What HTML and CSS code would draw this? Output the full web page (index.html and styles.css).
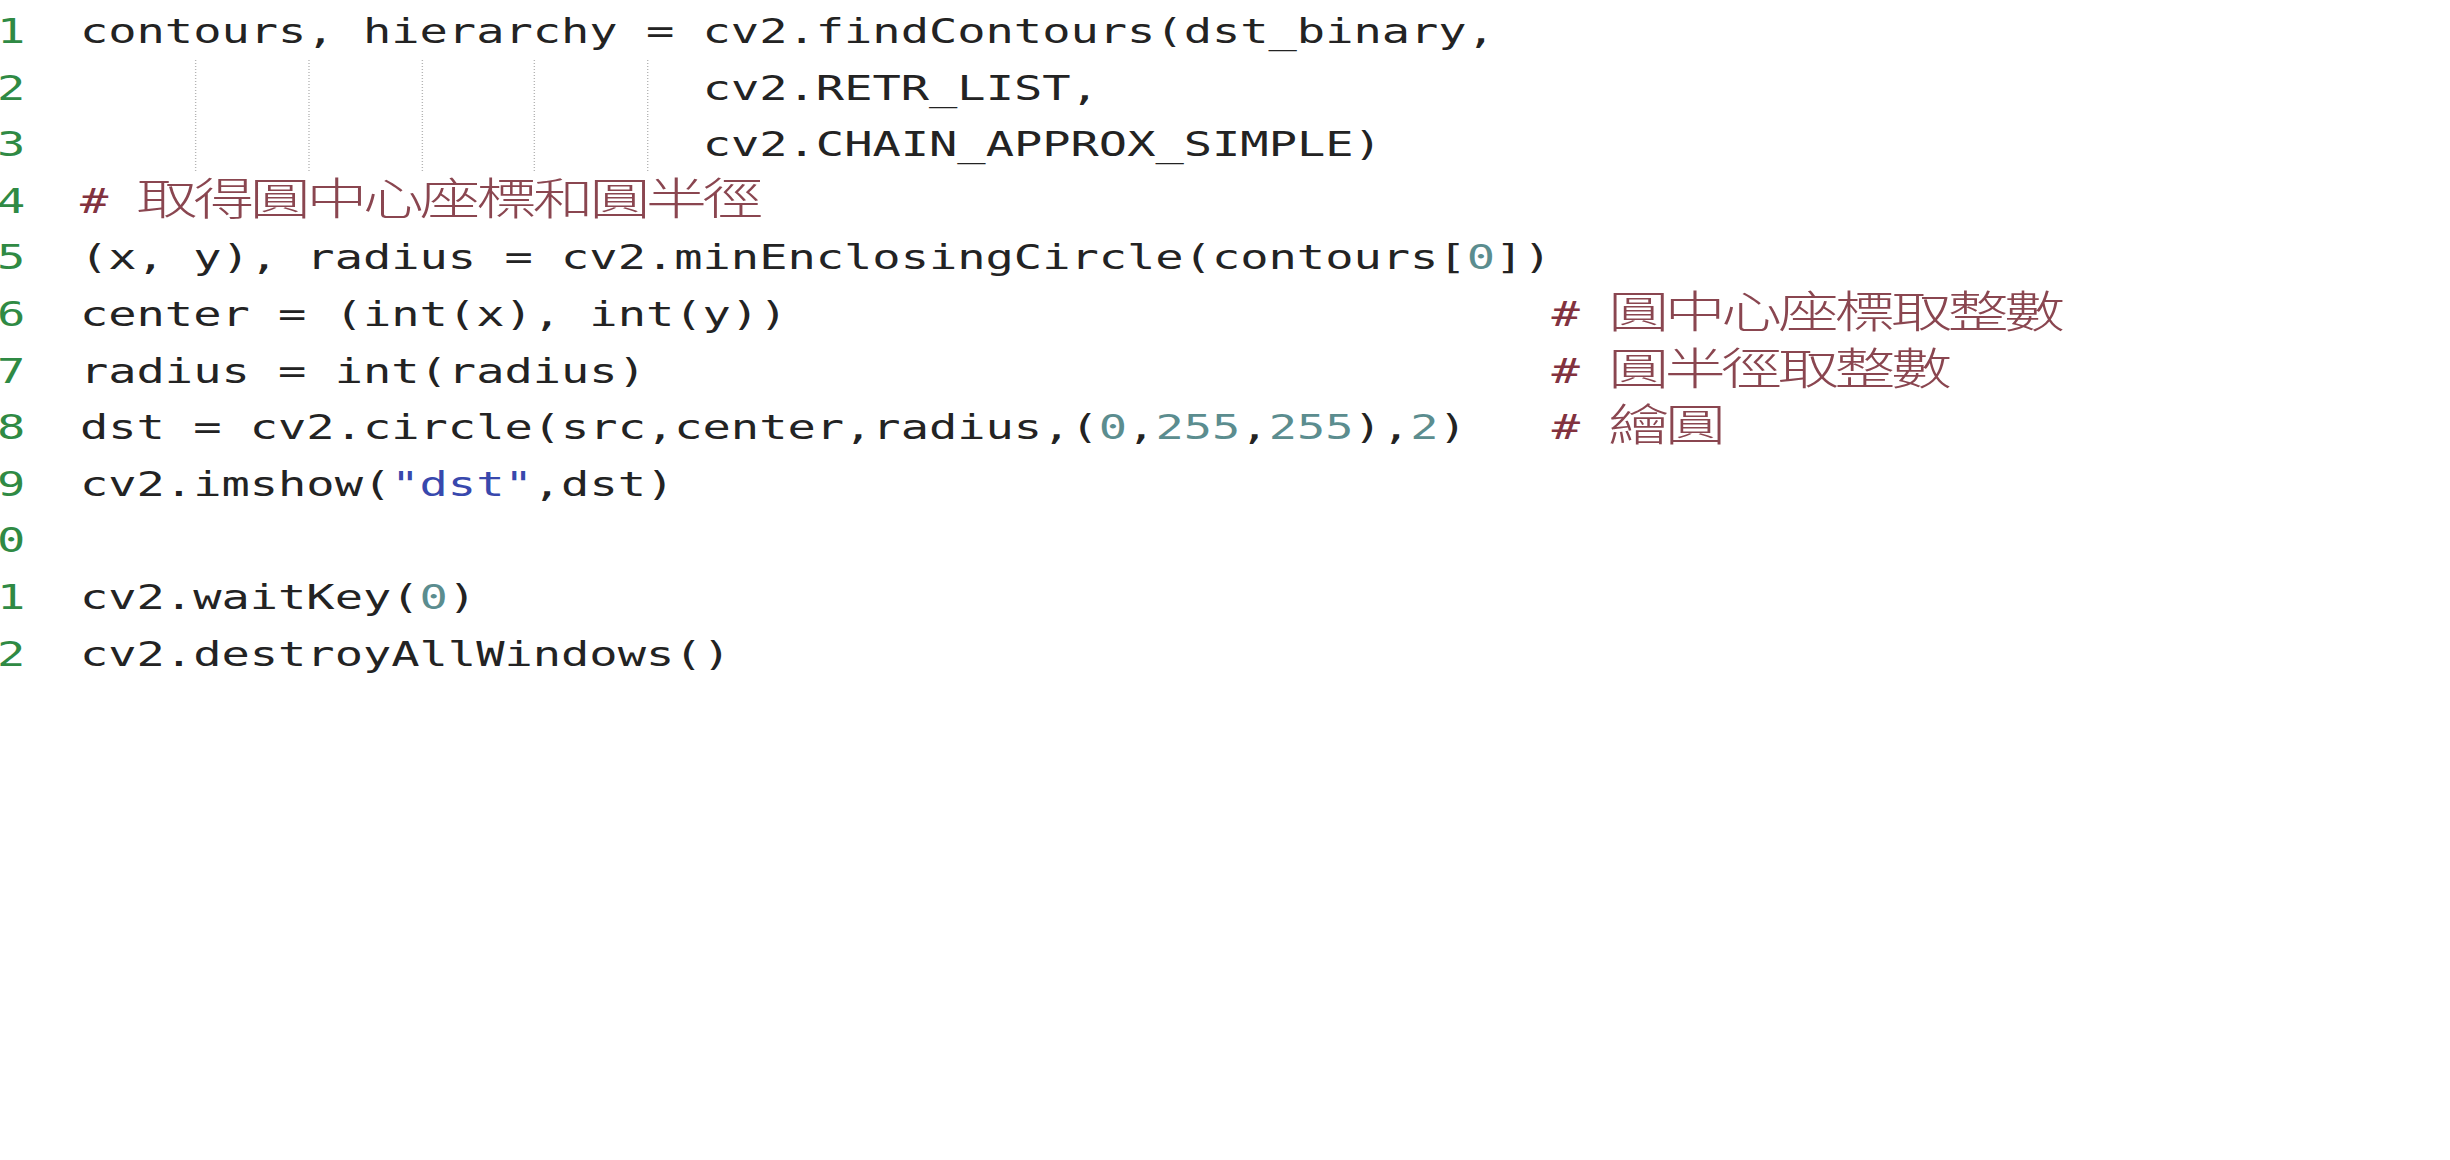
FILE: index.html
```html
<!DOCTYPE html>
<html lang="zh-Hant">
<head>
<meta charset="utf-8">
<title>cv2 minEnclosingCircle</title>
<link rel="stylesheet" href="styles.css">
</head>
<body>
<div class="editor">
  <div class="line"><span class="ln">1</span><span class="code">contours, hierarchy = cv2.findContours(dst_binary,</span></div>
  <div class="line"><span class="ln">2</span><span class="code">    <span class="guide">    </span><span class="guide">    </span><span class="guide">    </span><span class="guide">    </span><span class="guide">  </span>cv2.RETR_LIST,</span></div>
  <div class="line"><span class="ln">3</span><span class="code">    <span class="guide">    </span><span class="guide">    </span><span class="guide">    </span><span class="guide">    </span><span class="guide">  </span>cv2.CHAIN_APPROX_SIMPLE)</span></div>
  <div class="line"><span class="ln">4</span><span class="code"><span class="cm"># <span class="cjk">取得圓中心座標和圓半徑</span></span></span></div>
  <div class="line"><span class="ln">5</span><span class="code">(x, y), radius = cv2.minEnclosingCircle(contours[<span class="num">0</span>])</span></div>
  <div class="line"><span class="ln">6</span><span class="code">center = (int(x), int(y))                           <span class="cm"># <span class="cjk">圓中心座標取整數</span></span></span></div>
  <div class="line"><span class="ln">7</span><span class="code">radius = int(radius)                                <span class="cm"># <span class="cjk">圓半徑取整數</span></span></span></div>
  <div class="line"><span class="ln">8</span><span class="code">dst = cv2.circle(src,center,radius,(<span class="num">0</span>,<span class="num">255</span>,<span class="num">255</span>),<span class="num">2</span>)   <span class="cm"># <span class="cjk">繪圓</span></span></span></div>
  <div class="line"><span class="ln">9</span><span class="code">cv2.imshow(<span class="str">"dst"</span>,dst)</span></div>
  <div class="line"><span class="ln">10</span><span class="code"></span></div>
  <div class="line"><span class="ln">11</span><span class="code">cv2.waitKey(<span class="num">0</span>)</span></div>
  <div class="line"><span class="ln">12</span><span class="code">cv2.destroyAllWindows()</span></div>
</div>
</body>
</html>
```

FILE: styles.css
```css
html, body {
  margin: 0;
  padding: 0;
  background: #ffffff;
}

.editor {
  padding-top: 3px;
  font-family: "DejaVu Sans Mono", "Liberation Mono", monospace;
  font-size: 34px;
  line-height: 56.6px;
  color: #232323;
  transform: scaleX(1.3825);
  transform-origin: 0 0;
}

.line {
  display: flex;
  height: 56.6px;
  white-space: pre;
}

.ln {
  flex: none;
  width: 2ch;
  margin-left: -22.7px;
  text-align: right;
  color: #2f8a44;
}

.code {
  padding-left: 39.6px;
}

.guide {
  display: inline-block;
  height: 56.6px;
  vertical-align: top;
  background-image: linear-gradient(to bottom, #b4b4b4 50%, transparent 50%);
  background-size: 1px 3px;
  background-repeat: repeat-y;
  background-position: 1px 0;
}

.num {
  color: #5b8d8f;
}

.str {
  color: #3848ad;
}

.cm {
  color: #82323f;
}

.cjk {
  font-family: "Noto Sans CJK TC", "Noto Sans CJK SC", sans-serif;
  font-weight: 300;
  font-size: 44px;
  line-height: 0;
  letter-spacing: -3.06px;
  color: #8a4650;
  vertical-align: -2px;
}
```
